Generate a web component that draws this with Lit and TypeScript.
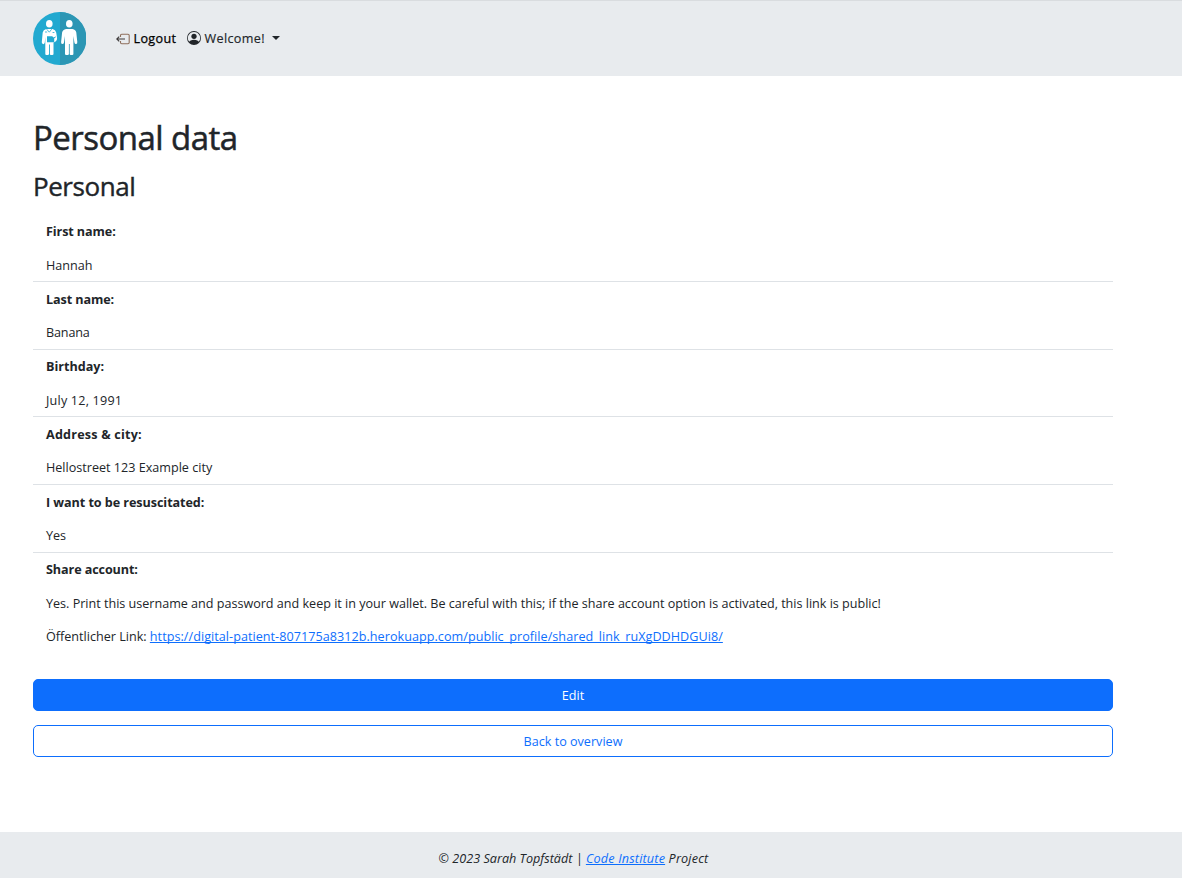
import { LitElement, html, css, nothing } from "lit";
import { customElement } from "lit/decorators.js";

const SHARE_URL =
  "https://digital-patient-807175a8312b.herokuapp.com/public_profile/shared_link_ruXgDDHDGUi8/";

const fields: { label: string; value: string; cls: string }[] = [
  { label: "First name:", value: "Hannah", cls: "first" },
  { label: "Last name:", value: "Banana", cls: "last" },
  { label: "Birthday:", value: "July 12, 1991", cls: "birthday" },
  { label: "Address & city:", value: "Hellostreet 123 Example city", cls: "address" },
  { label: "I want to be resuscitated:", value: "Yes", cls: "resus" },
  {
    label: "Share account:",
    value:
      "Yes. Print this username and password and keep it in your wallet. Be careful with this; if the share account option is activated, this link is public!",
    cls: "share",
  },
];

@customElement("app-root")
export class AppRoot extends LitElement {
  static styles = css`
    :host {
      display: flex;
      flex-direction: column;
      box-sizing: border-box;
      height: 878px;
      overflow: hidden;
      background: #fff;
      color: #212529;
      font: 12.6px/20px "Open Sans", "Noto Sans", sans-serif;
    }
    * { box-sizing: border-box; }
    a { color: #0d6efd; text-decoration: underline; text-underline-offset: 1px; text-decoration-thickness: 1px; text-decoration-skip-ink: none; }
    header {
      flex: none;
      height: 76px;
      display: flex;
      align-items: center;
      background: #e8ebee;
      border-top: 1px solid #d9dcdf;
      padding-left: 33px;
    }
    .logo { display: block; width: 53px; height: 53px; margin: -1px 30px 0 0; }
    .nav { display: flex; align-items: center; color: #212529; text-decoration: none; white-space: nowrap; }
    .nav svg { display: block; flex: none; }
    .logout { color: #000; width: 71px; letter-spacing: 0.35px; -webkit-text-stroke: 0.25px #000; }
    .logout svg { margin-right: 3.5px; }
    .welcome { letter-spacing: 0.35px; -webkit-text-stroke: 0.15px #212529; }
    .welcome svg { margin: -1px 3.5px 0 0; }
    .caret { border: 4px solid transparent; border-top-color: #212529; border-bottom: 0; margin: -2px 0 0 7.5px; }
    main { flex: 1; width: 1113px; padding: 42px 0 0 33px; }
    h1, h2 { margin: 0; font-weight: 500; white-space: nowrap; }
    h1 { font-size: 33px; line-height: 40px; letter-spacing: -0.54px; -webkit-text-stroke: 0.5px #212529; }
    h2 { font-size: 26px; line-height: 32px; margin-top: 12px; letter-spacing: -0.45px; -webkit-text-stroke: 0.4px #212529; }
    .table { margin-top: 12.3px; }
    .row { height: 67.65px; padding: 7.7px 13px 0; border-bottom: 1px solid #dee2e6; white-space: nowrap; }
    .row.share { height: 101px; border-bottom: 0; }
    .label, .value { height: 20px; }
    .label { font-weight: 700; margin-bottom: 13.55px; letter-spacing: -0.1px; }
    .birthday .label { letter-spacing: 0; }
    .address .label { letter-spacing: 0.2px; }
    .resus .label { letter-spacing: -0.06px; }
    .last .value { letter-spacing: -0.15px; }
    .birthday .value { letter-spacing: 0.2px; }
    .share .value { letter-spacing: -0.012px; }
    .link { margin-top: 13.2px; height: 20px; }
    .url { letter-spacing: 0.045px; }
    .btn {
      display: flex;
      align-items: center;
      justify-content: center;
      width: 100%;
      height: 32px;
      padding: 2px 0 0;
      font: inherit;
      border: 1px solid #0d6efd;
      border-radius: 5px;
      background: #0d6efd;
      color: #fff;
    }
    .edit { margin-top: 25.5px; }
    .back { margin-top: 14px; background: #fff; color: #0d6efd; }
    footer {
      flex: none;
      height: 46px;
      padding: 7px 35px 0 0;
      display: flex;
      align-items: center;
      justify-content: center;
      background: #e8ebee;
      font-style: italic;
      letter-spacing: 0.19px;
      white-space: pre;
    }
    .copy { letter-spacing: 0.01px; }
  `;

  render() {
    return html`
      <header>
        <svg class="logo" viewBox="0 0 53 53">
          <circle cx="26.5" cy="26.5" r="26.5" fill="#22a9d0" />
          <path d="M27 0a26.5 26.5 0 0 1 0 53z" fill="#2c96b4" />
          <g fill="#fff">
            <ellipse cx="16.3" cy="11.7" rx="3.3" ry="3.8" />
            <path d="M13.2 17h6.4q3 .7 3.6 3.6l.9 5.4q.2 2-1.2 3.2-1.2 1-2.4 1.2V42q0 1-1.2 1h-1.4q-1 0-1-1V32.5h-.9V42q0 1-1.2 1h-1.4q-1.1 0-1.1-1V25l-.5 5.5q-.5 1.9-1.8 1.6-1.4-.4-1.2-2.1l.9-9.4q.5-3 3.5-3.6z" />
            <ellipse cx="36.3" cy="11.7" rx="3.3" ry="3.8" />
            <path d="M33.1 17h6.4q3.3.7 3.8 3.6l1 9.4q.2 1.8-1.2 2.1-1.3.2-1.7-1.6l-1-6.5V42q0 1-1.2 1h-1.5q-1 0-1-1V32h-.8v10q0 1-1.2 1h-1.5q-1.2 0-1.2-1V24l-1 6.5q-.4 1.8-1.7 1.6-1.4-.3-1.2-2.1l1-9.4q.6-3 4-3.6z" />
          </g>
          <path d="M14 24.3h5.2l2 1.8v4.2H14z" fill="#22a9d0" />
          <path d="M13.7 17.2l2.6 3 2.4-3M12 20h2.2M19.6 20.5h1.8" fill="none" stroke="#22a9d0" stroke-width=".8" />
          <path d="M20.4 26.3l2.3-1.4" stroke="#22a9d0" />
        </svg>
        <a class="nav logout">
          <svg width="14" height="14" viewBox="0 0 14 14" fill="none" stroke="#3c3838" stroke-width="1.1">
            <path d="M4.5 5V3.5q0-1.2 1.2-1.2H12q1.2 0 1.2 1.2v7q0 1.2-1.2 1.2H5.7q-1.2 0-1.2-1.2V9" stroke="#8f6f5c" />
            <path d="M.8 7H9M3.2 4.6.8 7l2.4 2.4" />
          </svg>
          <span>Logout</span>
        </a>
        <a class="nav welcome">
          <svg width="14" height="14" viewBox="0 0 16 16" fill="#212529">
            <path d="M11 6a3 3 0 1 1-6 0 3 3 0 0 1 6 0z" />
            <path fill-rule="evenodd" d="M0 8a8 8 0 1 1 16 0A8 8 0 0 1 0 8zm8-7a7 7 0 0 0-5.468 11.37C3.242 11.226 4.805 10 8 10s4.757 1.225 5.468 2.37A7 7 0 0 0 8 1z" />
          </svg>
          <span>Welcome!</span>
          <span class="caret"></span>
        </a>
      </header>
      <main>
        <h1>Personal data</h1>
        <h2>Personal</h2>
        <div class="table">
          ${fields.map(
            (f) => html`
              <div class="row ${f.cls}">
                <div class="label">${f.label}</div>
                <div class="value">${f.value}</div>
                ${f.cls === "share"
                  ? html`<div class="link">Öffentlicher Link: <a class="url">${SHARE_URL}</a></div>`
                  : nothing}
              </div>
            `
          )}
        </div>
        <button class="btn edit">Edit</button>
        <button class="btn back">Back to overview</button>
      </main>
      <footer><span class="copy">© 2023 Sarah Topfstädt | </span><a>Code Institute</a><span> Project</span></footer>
    `;
  }
}
